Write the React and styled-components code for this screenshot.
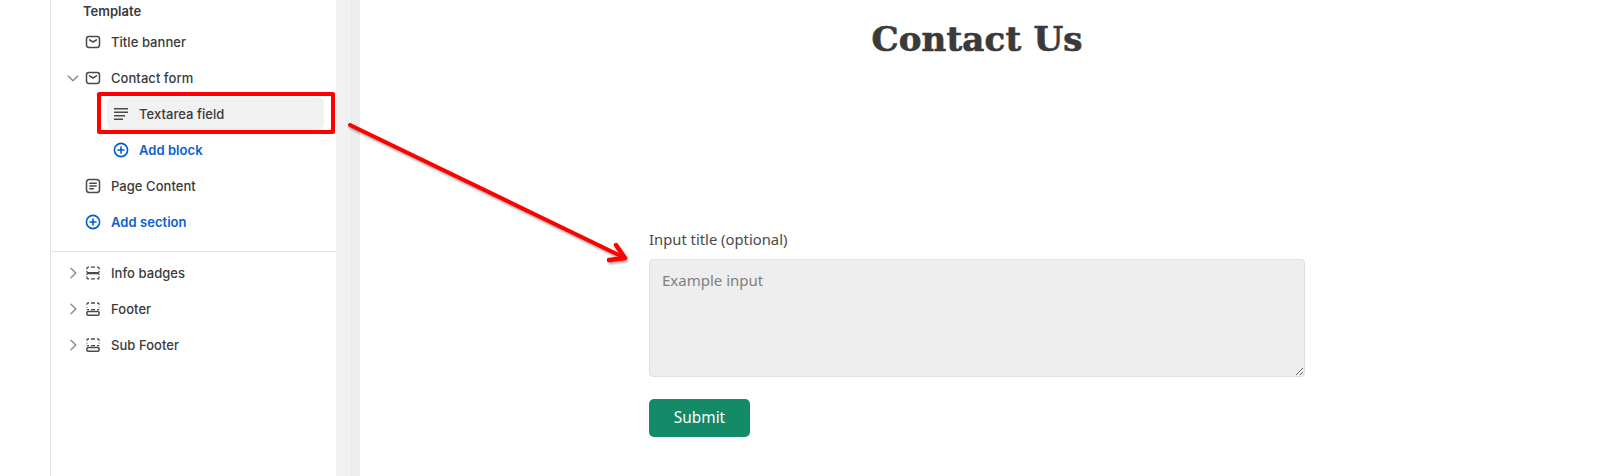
import React from 'react';
import styled, { createGlobalStyle } from 'styled-components';

const GlobalStyle = createGlobalStyle`
  html, body {
    margin: 0;
    height: 100%;
    background: #fff;
    overflow: hidden;
  }
  #root {
    height: 100%;
  }
`;

const MailIcon = () => (
  <svg width="20" height="20" viewBox="0 0 20 20" fill="none" stroke="#4a4a4a" strokeWidth="1.5">
    <rect x="3.5" y="4.5" width="13" height="11" rx="2.4" />
    <path d="M6.5 7.8 L10 10 L13.5 7.8" strokeLinecap="round" strokeLinejoin="round" />
  </svg>
);

const ContentIcon = () => (
  <svg width="20" height="20" viewBox="0 0 20 20" fill="none" stroke="#4a4a4a" strokeWidth="1.5">
    <rect x="3.5" y="3.5" width="13" height="13" rx="2.8" />
    <path d="M6.8 7.3h6.4M6.8 10h6.4M6.8 12.7h3.6" strokeLinecap="round" />
  </svg>
);

const AlignIcon = () => (
  <svg width="20" height="20" viewBox="0 0 20 20" fill="none" stroke="#4a4a4a" strokeWidth="1.4">
    <path d="M3 4.7h14M3 8.2h14M3 11.7h11M3 15.2h9" />
  </svg>
);

const PlusIcon = () => (
  <svg width="20" height="20" viewBox="0 0 20 20" fill="none" stroke="#005bd3" strokeWidth="1.6">
    <circle cx="10" cy="10" r="6.6" />
    <path d="M10 7v6M7 10h6" strokeLinecap="round" />
  </svg>
);

const BadgesIcon = () => (
  <svg width="20" height="20" viewBox="0 0 20 20" fill="none" stroke="#4a4a4a" strokeWidth="1.3">
    <path d="M3.9 6.5V5.4a1.2 1.2 0 0 1 1.2-1.2H6M8 4.2h4M14 4.2h.9a1.2 1.2 0 0 1 1.2 1.2v1.1" />
    <path d="M3.9 8v.6a1 1 0 0 0 1 1h10.2a1 1 0 0 0 1-1V8" />
    <path d="M3.9 12v-.4a1 1 0 0 1 1-1h10.2a1 1 0 0 1 1 1v.4" />
    <path d="M3.9 13.5v1.1a1.2 1.2 0 0 0 1.2 1.2H6M8 15.8h4M14 15.8h.9a1.2 1.2 0 0 0 1.2-1.2v-1.1" />
  </svg>
);

const FooterIcon = () => (
  <svg width="20" height="20" viewBox="0 0 20 20" fill="none" stroke="#4a4a4a" strokeWidth="1.3">
    <path d="M3.9 5.8v-.6a1.2 1.2 0 0 1 1.2-1.2H6M8 4h4M14 4h.9a1.2 1.2 0 0 1 1.2 1.2v.6" />
    <path d="M3.9 7.8v.8M16.1 7.8v.8M3.9 10.3l.2.3H6M8 10.6h4M14 10.6h1.9l.2-.3" />
    <rect x="3.9" y="12.4" width="12.2" height="3.8" rx="1.2" strokeWidth="1.5" />
  </svg>
);

const ChevronRight = () => (
  <svg width="16" height="16" viewBox="0 0 16 16" fill="none" stroke="#8a8a8a" strokeWidth="1.4">
    <path d="M6 3.2 L10.8 8 L6 12.8" strokeLinecap="round" strokeLinejoin="round" />
  </svg>
);

const ChevronDown = () => (
  <svg width="16" height="16" viewBox="0 0 16 16" fill="none" stroke="#8a8a8a" strokeWidth="1.4">
    <path d="M3.2 6 L8 10.8 L12.8 6" strokeLinecap="round" strokeLinejoin="round" />
  </svg>
);

const App = () => (
  <Page>
    <GlobalStyle />
    <Rail />
    <Sidebar>
      <Section>
        <Heading>Template</Heading>
        <Row>
          <Caret />
          <MailIcon />
          <Label>Title banner</Label>
        </Row>
        <Row>
          <Caret><ChevronDown /></Caret>
          <MailIcon />
          <Label>Contact form</Label>
        </Row>
        <BlockRow $selected>
          <AlignIcon />
          <Label>Textarea field</Label>
        </BlockRow>
        <BlockRow>
          <PlusIcon />
          <Label $link>Add block</Label>
        </BlockRow>
        <Row>
          <Caret />
          <ContentIcon />
          <Label>Page Content</Label>
        </Row>
        <Row>
          <Caret />
          <PlusIcon />
          <Label $link>Add section</Label>
        </Row>
      </Section>
      <FooterSection>
        <Row>
          <Caret><ChevronRight /></Caret>
          <BadgesIcon />
          <Label>Info badges</Label>
        </Row>
        <Row>
          <Caret><ChevronRight /></Caret>
          <FooterIcon />
          <Label>Footer</Label>
        </Row>
        <Row>
          <Caret><ChevronRight /></Caret>
          <FooterIcon />
          <Label>Sub Footer</Label>
        </Row>
      </FooterSection>
    </Sidebar>
    <Gutter />
    <Preview>
      <Title>Contact Us</Title>
      <Form>
        <FieldLabel htmlFor="message">Input title (optional)</FieldLabel>
        <TextArea id="message" placeholder="Example input" />
        <Submit type="button">Submit</Submit>
      </Form>
    </Preview>
    <Highlight />
    <Arrow width="300" height="160" viewBox="0 0 300 160" fill="none" stroke="#ff0000" strokeWidth="4">
      <path d="M10 10 L283 142" strokeLinecap="round" />
      <path d="M276 130 L285 143 L269 145" strokeWidth="4.4" strokeLinecap="round" strokeLinejoin="round" />
    </Arrow>
  </Page>
);

const Page = styled.div`
  position: relative;
  display: flex;
  height: 476px;
  overflow: hidden;
  font-family: 'Inter', sans-serif;
`;

const Rail = styled.div`
  width: 50px;
  flex: none;
  border-right: 1px solid #e3e3e3;
  background: #fff;
`;

const Sidebar = styled.aside`
  width: 285px;
  flex: none;
  background: #fff;
`;

const Section = styled.section`
  padding-bottom: 11px;
  border-bottom: 1px solid #e3e3e3;
`;

const FooterSection = styled.section`
  padding-top: 3px;
`;

const Heading = styled.h2`
  margin: 0 0 0 32px;
  height: 24px;
  font-size: 13px;
  line-height: 23px;
  font-weight: 600;
  color: #3a3a3a;
`;

const Row = styled.div`
  display: flex;
  align-items: center;
  gap: 8px;
  height: 36px;
  padding-left: 14px;
`;

const Caret = styled.span`
  display: flex;
  width: 16px;
  height: 16px;
  margin-right: -6px;
  flex: none;
`;

const BlockRow = styled.div`
  display: flex;
  align-items: center;
  gap: 8px;
  height: ${({ $selected }) => ($selected ? '33px' : '36px')};
  margin: ${({ $selected }) => ($selected ? '1px 12px 2px 56px' : '0 12px 0 56px')};
  padding-left: 4px;
  border-radius: 6px;
  background: ${({ $selected }) => ($selected ? '#f1f1f1' : 'transparent')};
`;

const Label = styled.span`
  font-size: 13px;
  font-weight: ${({ $link }) => ($link ? 600 : 550)};
  letter-spacing: 0.05px;
  color: ${({ $link }) => ($link ? '#0a5fd0' : '#3a3a3a')};
`;

const Gutter = styled.div`
  width: 15px;
  flex: none;
  margin-right: 8px;
  background: #f1f1f1;
  border-right: 1px solid #e9e9e9;
  box-shadow: 8px 0 0 #eeeeee;
`;

const Preview = styled.main`
  flex: 1;
  background: #fff;
`;

const Title = styled.h1`
  margin: 14px 0 0;
  padding-right: 6px;
  text-align: center;
  font-family: 'DejaVu Serif', serif;
  font-size: 34px;
  line-height: 50px;
  font-weight: 700;
  letter-spacing: 0.2px;
  color: #3a3a3a;
  -webkit-text-stroke: 0.7px #3a3a3a;
`;

const Form = styled.form`
  display: flex;
  flex-direction: column;
  align-items: flex-start;
  width: 656px;
  margin: 165px 0 0 289px;
  font-family: 'Noto Sans', sans-serif;
`;

const FieldLabel = styled.label`
  font-size: 14.8px;
  line-height: 20px;
  color: #4a4a4a;
  margin-bottom: 10px;
`;

const TextArea = styled.textarea`
  box-sizing: border-box;
  width: 100%;
  height: 118px;
  margin: 0;
  padding: 10px 12px;
  border: 1px solid #e0e0e0;
  border-radius: 4px;
  background: #eeeeee;
  font-family: inherit;
  font-size: 15px;
  line-height: 21px;

  &::placeholder {
    color: #808080;
    opacity: 1;
  }
`;

const Submit = styled.button`
  width: 101px;
  height: 38px;
  margin-top: 22px;
  padding: 0 0 2px;
  border: 0;
  border-radius: 5px;
  background: #138a68;
  color: #fff;
  font-family: inherit;
  font-size: 15.4px;
`;

const Highlight = styled.div`
  position: absolute;
  left: 97px;
  top: 92px;
  width: 238px;
  height: 42px;
  box-sizing: border-box;
  border: 4px solid #ff0000;
  border-radius: 2px;
`;

const Arrow = styled.svg`
  position: absolute;
  left: 340px;
  top: 115px;
  filter: drop-shadow(1px 2px 1px rgba(0, 0, 0, 0.35));
`;

export default App;
